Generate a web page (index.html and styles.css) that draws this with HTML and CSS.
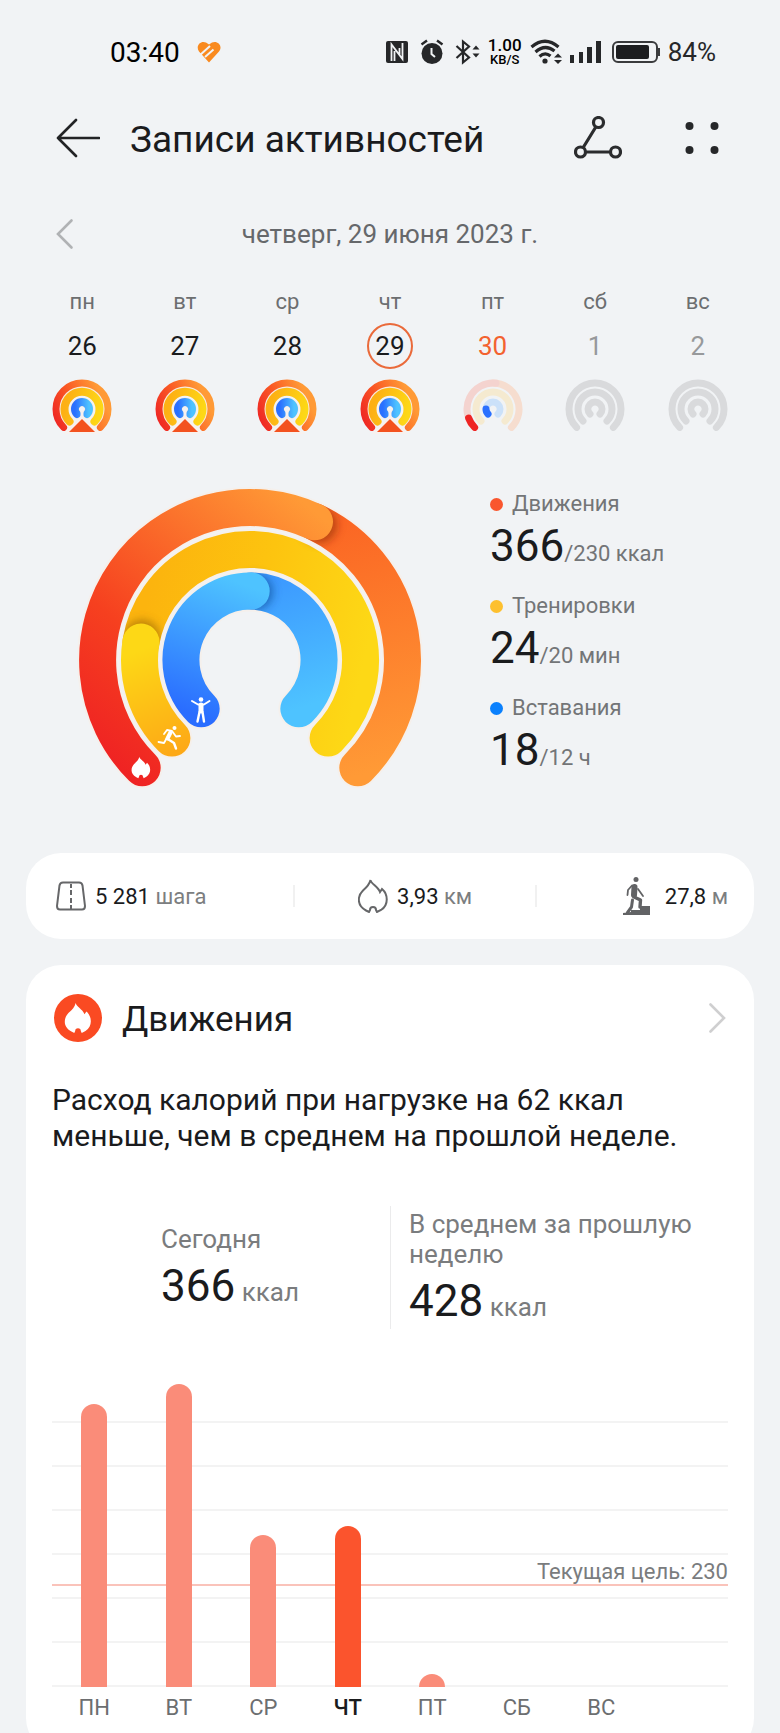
FILE: index.html
```html
<!DOCTYPE html>
<html lang="ru">
<head>
	<meta charset="UTF-8">
	<meta name="viewport" content="width=device-width, initial-scale=1">
	<title>Записи активностей</title>
	<link rel="stylesheet" href="styles.css">
</head>
<body>

<!-- shared shapes -->
<svg class="defs" aria-hidden="true">
	<defs>
		<linearGradient id="gMove" x1="0" y1="1" x2="1" y2="0.6">
			<stop offset="0" stop-color="#ee2424"/><stop offset="0.5" stop-color="#fa5a24"/><stop offset="1" stop-color="#ff9a36"/>
		</linearGradient>
		<linearGradient id="gTrain" x1="0" y1="0.6" x2="1" y2="0.8">
			<stop offset="0" stop-color="#fdb014"/><stop offset="1" stop-color="#fdd816"/>
		</linearGradient>
		<linearGradient id="gStand" x1="0" y1="0.7" x2="1" y2="0.7">
			<stop offset="0" stop-color="#2a70ff"/><stop offset="1" stop-color="#4ec3ff"/>
		</linearGradient>
	</defs>
	<symbol id="ringFull" viewBox="-30 -31 60 56">
		<g fill="none" stroke-linecap="round">
			<path stroke="#f8e9de" stroke-width="9" d="M-12.7 12.7A18 18 0 1 1 12.7 12.7M-5 5A7 7 0 1 1 5 5"/>
			<path stroke="url(#gMove)" stroke-width="7" d="M-18.4 18.4A26 26 0 1 1 18.4 18.4"/>
			<path stroke="url(#gTrain)" stroke-width="8" d="M-12.5 12.5A17.5 17.5 0 1 1 12.5 12.5"/>
			<path stroke="url(#gStand)" stroke-width="8" d="M-5 5A7 7 0 1 1 5 5"/>
		</g>
		<path fill="#f8f1ee" d="M0 7L18 25H-18z"/>
		<path fill="#f8f1ee" d="M-1.5 2h3v8h-3z"/>
		<path fill="#f3521f" d="M0 10L13 23H-13z"/>
	</symbol>
	<symbol id="ringEmpty" viewBox="-30 -31 60 56">
		<g fill="none" stroke="#d9dadc" stroke-width="7" stroke-linecap="round">
			<path d="M-18.4 18.4A26 26 0 1 1 18.4 18.4"/>
			<path d="M-12 12A17 17 0 1 1 12 12"/>
			<path d="M-5 5A7 7 0 1 1 5 5"/>
		</g>
	</symbol>
	<symbol id="flame" viewBox="0 0 30 34">
		<path d="M12.5 1C13 5 20 7.5 22 13L24 10C30 15 31 26 23 31L19 33L18 31A3 3 0 0 0 12 31L11 33L8 31.5C-1.5 26.500 -0.500 17 5 11.500C9 8 11.500 5.500 12.500 1z"/>
	</symbol>
</svg>

<div class="statusBar">
	<div class="statusLeft">
		<span class="clock">03:40</span>
		<svg width="24" height="22" viewBox="0 0 24 22">
			<path d="M12 21.5L2 10.5C-2 4.5 4 -1 9 1.5L12 3.5L15 1.5C20 -1 26.500 4.500 22 10.500z" fill="#f98a1f"/>
			<path d="M2 15L13 5M8 16L16.500 8.500" fill="none" stroke="#f1f3f5" stroke-width="2"/>
		</svg>
	</div>
	<div class="statusRight">
		<svg width="26" height="24" viewBox="0 0 26 24">
			<rect x="2" y="1" width="22" height="22" rx="2" fill="#262729"/>
			<path d="M7.5 21V4.5l8 10.5V8M10.5 21V11M18.5 3v16l-8-10.5" fill="none" stroke="#f1f3f5" stroke-width="1.8"/>
		</svg>
		<svg width="28" height="26" viewBox="0 0 28 26">
			<circle cx="14" cy="14.5" r="10.5" fill="#262729"/>
			<path d="M3.5 5.5L9 1.5M24.5 5.5L19 1.5" stroke="#262729" stroke-width="2.4"/>
			<path d="M13.5 9v6l3.5 3" fill="none" stroke="#f1f3f5" stroke-width="2"/>
		</svg>
		<svg width="26" height="26" viewBox="0 0 26 26">
			<path d="M2.5 7L15 18.5L9 23.5V2.5L15 7.5L2.5 19" fill="none" stroke="#262729" stroke-width="2.2"/>
			<path d="M18.5 10.5L22 6.5L25.5 10.5zM18.5 14.5L22 18.5L25.5 14.5z" fill="#262729"/>
		</svg>
		<span class="speed"><b>1.00</b><b>KB/S</b></span>
		<svg width="32" height="26" viewBox="0 0 32 26">
			<g fill="none" stroke="#262729" stroke-width="3.2">
				<path d="M1.5 8Q15 -3.5 28.5 8"/>
				<path d="M5.5 13Q15 4.5 24.5 12"/>
				<path d="M9.5 17.5Q15 12.5 20.5 17"/>
			</g>
			<circle cx="15" cy="22" r="2.6" fill="#262729"/>
			<path d="M24 18.5L28 14.5L32 18.5zM24 21L28 25L32 21z" fill="#262729"/>
		</svg>
		<svg width="32" height="24" viewBox="0 0 32 24" fill="#262729">
			<rect x="0" y="15" width="4" height="8"/><rect x="9" y="12" width="4" height="11"/><rect x="17" y="7" width="5" height="16"/><rect x="26" y="1" width="5" height="22"/>
		</svg>
		<svg width="50" height="24" viewBox="0 0 50 24">
			<rect x="3" y="2" width="44" height="20" rx="5" fill="none" stroke="#3a3b3d" stroke-width="2"/>
			<rect x="6" y="5" width="33" height="14" rx="2" fill="#1d1e20"/>
			<rect x="48" y="8" width="2" height="8" fill="#3a3b3d"/>
		</svg>
		<span class="battery">84%</span>
	</div>
</div>

<header class="topBar">
	<button type="button" class="iconBtn" aria-label="Назад">
		<svg width="44" height="44" viewBox="0 0 44 44" fill="none" stroke="#222325" stroke-width="2.6" stroke-linecap="round" stroke-linejoin="round"><path d="M20 4L2 22L20 40M2 22H43"/></svg>
	</button>
	<h1 class="title">Записи активностей</h1>
	<button type="button" class="iconBtn" aria-label="Маршрут">
		<svg width="48" height="44" viewBox="0 0 48 44" fill="none" stroke="#2b2c2e" stroke-width="3.2">
			<path d="M21.5 11.5L9.5 31M12 36H36"/><circle cx="24.5" cy="6.5" r="5"/><circle cx="6.5" cy="36" r="5"/><circle cx="41.5" cy="36" r="5"/>
		</svg>
	</button>
	<button type="button" class="iconBtn menuBtn" aria-label="Меню">
		<svg width="34" height="34" viewBox="0 0 34 34" fill="#262729"><circle cx="4.5" cy="5" r="4"/><circle cx="29.5" cy="5" r="4"/><circle cx="4.5" cy="29" r="4"/><circle cx="29.5" cy="29" r="4"/></svg>
	</button>
</header>

<main>
	<div class="dateRow">
		<button type="button" class="iconBtn" aria-label="Предыдущий день">
			<svg width="18" height="32" viewBox="0 0 18 32" fill="none" stroke="#b0b2b4" stroke-width="2.6" stroke-linecap="round"><path d="M15.5 2.5L2 16L15.5 29.5"/></svg>
		</button>
		<span>четверг, 29 июня 2023 г.</span>
	</div>

	<div class="week">
		<button type="button" class="day"><span class="dayName">пн</span><span class="dayNum">26</span><svg class="dayRing"><use href="#ringFull"/></svg></button>
		<button type="button" class="day"><span class="dayName">вт</span><span class="dayNum">27</span><svg class="dayRing"><use href="#ringFull"/></svg></button>
		<button type="button" class="day"><span class="dayName">ср</span><span class="dayNum">28</span><svg class="dayRing"><use href="#ringFull"/></svg></button>
		<button type="button" class="day selected"><span class="dayName">чт</span><span class="dayNum">29</span><svg class="dayRing"><use href="#ringFull"/></svg></button>
		<button type="button" class="day today"><span class="dayName">пт</span><span class="dayNum">30</span>
			<svg class="dayRing" viewBox="-30 -31 60 56" fill="none" stroke-width="7" stroke-linecap="round">
				<path stroke="#f6ddcf" d="M0 -26A26 26 0 0 1 18.4 18.4"/>
				<path stroke="#f4d3cf" d="M-18.4 18.4A26 26 0 0 1 3 -25.8"/>
				<path stroke="#f5ead0" d="M-12 12A17 17 0 1 1 12 12"/>
				<path stroke="#cbe1f9" d="M-5 5A7 7 0 1 1 5 5"/>
				<path stroke="#ee2424" d="M-18.4 18.4A26 26 0 0 1 -24.4 9"/>
				<path stroke="#2a70ff" d="M-5 5A7 7 0 0 1 -7 0"/>
			</svg>
		</button>
		<button type="button" class="day future"><span class="dayName">сб</span><span class="dayNum">1</span><svg class="dayRing"><use href="#ringEmpty"/></svg></button>
		<button type="button" class="day future"><span class="dayName">вс</span><span class="dayNum">2</span><svg class="dayRing"><use href="#ringEmpty"/></svg></button>
	</div>

	<section class="rings">
		<svg class="bigRing" viewBox="-180 -180 360 310">
			<defs>
				<linearGradient id="moveBase" gradientUnits="userSpaceOnUse" x1="60" y1="-140" x2="130" y2="110"><stop offset="0" stop-color="#fb6423"/><stop offset="1" stop-color="#ff9a36"/></linearGradient>
				<linearGradient id="moveHead" gradientUnits="userSpaceOnUse" x1="-130" y1="110" x2="75" y2="-140"><stop offset="0" stop-color="#ef2323"/><stop offset="0.35" stop-color="#f6401f"/><stop offset="1" stop-color="#ff9a36"/></linearGradient>
				<linearGradient id="trainBase" gradientUnits="userSpaceOnUse" x1="-110" y1="-30" x2="110" y2="20"><stop offset="0" stop-color="#fcb40e"/><stop offset="0.5" stop-color="#fdc40f"/><stop offset="1" stop-color="#fdd816"/></linearGradient>
				<linearGradient id="trainHead" gradientUnits="userSpaceOnUse" x1="-70" y1="90" x2="-110" y2="-10"><stop offset="0" stop-color="#fda916"/><stop offset="1" stop-color="#fdd816"/></linearGradient>
				<linearGradient id="standBase" gradientUnits="userSpaceOnUse" x1="20" y1="-80" x2="60" y2="45"><stop offset="0" stop-color="#3c99ff"/><stop offset="1" stop-color="#4ec3ff"/></linearGradient>
				<linearGradient id="standHead" gradientUnits="userSpaceOnUse" x1="-55" y1="55" x2="-5" y2="-75"><stop offset="0" stop-color="#2a6dff"/><stop offset="1" stop-color="#4ec3ff"/></linearGradient>
				<filter id="soft" x="-50%" y="-50%" width="200%" height="200%"><feGaussianBlur stdDeviation="4"/></filter>
				<mask id="ringMask" maskUnits="userSpaceOnUse" x="-180" y="-180" width="360" height="310">
					<g fill="none" stroke="#fff" stroke-width="37" stroke-linecap="round">
						<path d="M-107.8 107.8A152.5 152.5 0 1 1 107.8 107.8"/><path d="M-78.1 78.1A110.5 110.5 0 1 1 78.1 78.1"/><path d="M-48.8 48.8A69 69 0 1 1 48.8 48.8"/>
					</g>
				</mask>
			</defs>
			<g fill="none" stroke-linecap="round">
				<g stroke="#f5f0ec" stroke-width="41">
					<path d="M-107.8 107.8A152.5 152.5 0 1 1 107.8 107.8"/><path d="M-78.1 78.1A110.5 110.5 0 1 1 78.1 78.1"/><path d="M-48.8 48.8A69 69 0 1 1 48.8 48.8"/>
				</g>
				<g stroke-width="37">
					<path stroke="url(#moveBase)" d="M64.5 -138.2A152.5 152.5 0 0 1 107.8 107.8"/>
					<path stroke="url(#trainBase)" d="M-109 -18A110.5 110.5 0 1 1 78.1 78.1"/>
					<path stroke="url(#standBase)" d="M1.2 -69A69 69 0 0 1 48.8 48.8"/>
				</g>
			</g>
			<g mask="url(#ringMask)">
				<g filter="url(#soft)" fill-opacity="0.5">
					<circle cx="69" cy="-135" r="18" fill="#7a2400"/>
					<circle cx="-108" cy="-22" r="18" fill="#7a5200"/>
					<circle cx="5" cy="-68" r="18" fill="#003a7a"/>
				</g>
			</g>
			<g fill="none" stroke-width="37" stroke-linecap="round">
				<path stroke="url(#moveHead)" d="M-107.8 107.8A152.5 152.5 0 0 1 64.5 -138.2"/>
				<path stroke="url(#trainHead)" d="M-78.1 78.1A110.5 110.5 0 0 1 -109 -18"/>
				<path stroke="url(#standHead)" d="M-48.8 48.8A69 69 0 0 1 1.2 -69"/>
			</g>
			<use href="#flame" x="-119" y="96" width="20" height="23" fill="#fff"/>
			<!-- runner -->
			<g fill="none" stroke="#fff" stroke-width="1.8" stroke-linecap="round" stroke-linejoin="round">
				<circle cx="-75.5" cy="68" r="2" fill="#fff" stroke="none"/>
				<path d="M-86 74L-83 70L-78 71L-74 76.5L-70 76"/>
				<path d="M-79.5 72.5L-82.5 78.5" stroke-width="4"/>
				<path d="M-83.5 78.5L-86 83L-91.5 82"/>
				<path d="M-81.5 79.5L-76 83L-74 88.5" stroke-width="2.4"/>
			</g>
			<!-- standing person -->
			<g fill="none" stroke="#fff" stroke-width="2" stroke-linecap="round" stroke-linejoin="round">
				<circle cx="-49" cy="39.5" r="2.3" fill="#fff" stroke="none"/>
				<path d="M-58 41L-52 44.5H-46L-40.5 41"/>
				<path d="M-49 45V51" stroke-width="5"/>
				<path d="M-50.5 52L-52.5 61.5M-47.5 52L-46 61.5" stroke-width="2.4"/>
			</g>
		</svg>

		<ul class="legend">
			<li><span class="legendName move">Движения</span><span class="legendValue"><strong>366</strong>/230 ккал</span></li>
			<li><span class="legendName train">Тренировки</span><span class="legendValue"><strong>24</strong>/20 мин</span></li>
			<li><span class="legendName stand">Вставания</span><span class="legendValue"><strong>18</strong>/12 ч</span></li>
		</ul>
	</section>

	<section class="card stats">
		<div class="stat">
			<svg width="30" height="30" viewBox="0 0 30 30" fill="none" stroke="#666769" stroke-width="2"><path d="M7 1.5H23Q26 1.5 26.5 4.5L29 25Q29 28.5 26 28.5H4Q1 28.5 1 25L3.5 4.5Q4 1.5 7 1.5z"/><path d="M15 3v4M15 9v5M15 17v5M15 24v4"/></svg>
			<span><b>5 281</b> шага</span>
		</div>
		<div class="stat">
			<svg width="30" height="34" fill="none" stroke="#666769" stroke-width="2"><use href="#flame"/></svg>
			<span><b>3,93</b> км</span>
		</div>
		<div class="stat stairs">
			<svg width="28" height="38" viewBox="0 0 28 38">
				<path d="M0 38v-2l8-1v-2h9v-4h10v9z" fill="#626365"/>
				<g fill="none" stroke="#626365" stroke-linecap="round" stroke-linejoin="round">
					<circle cx="13" cy="2.5" r="2.5" fill="#626365" stroke="none"/>
					<path d="M11.5 10L11 18" stroke-width="6"/>
					<path d="M9 8.5L5 13L4.5 18M15 12L20 19" stroke-width="1.8"/>
					<path d="M11 20L17.5 23L17 30" stroke-width="3.4"/>
					<path d="M9.5 23L8.5 30L4.5 35.5" stroke-width="3"/>
				</g>
			</svg>
			<span><b>27,8</b> м</span>
		</div>
	</section>

	<section class="card activity">
		<a class="cardHead" href="#move">
			<svg width="48" height="48" viewBox="0 0 48 48"><circle cx="24" cy="24" r="24" fill="#fa4a22"/><use href="#flame" x="10" y="8" width="28" height="32" fill="#fff"/></svg>
			<h2>Движения</h2>
			<svg width="18" height="32" viewBox="0 0 18 32" fill="none" stroke="#cfcfd0" stroke-width="2.6" stroke-linecap="round"><path d="M2.5 2.5L16 16L2.5 29.5"/></svg>
		</a>
		<p class="summary">Расход калорий при нагрузке на 62 ккал меньше, чем в среднем на прошлой неделе.</p>

		<div class="compare">
			<div class="compareItem now">
				<span class="compareName">Сегодня</span>
				<span class="compareValue"><strong>366</strong> ккал</span>
			</div>
			<div class="compareItem average">
				<span class="compareName">В среднем за прошлую неделю</span>
				<span class="compareValue"><strong>428</strong> ккал</span>
			</div>
		</div>

		<div class="chart">
			<div class="goal">Текущая цель: 230</div>
			<div class="bars">
				<div class="bar" style="height:283px"></div>
				<div class="bar" style="height:303px"></div>
				<div class="bar" style="height:152px"></div>
				<div class="bar current" style="height:161px"></div>
				<div class="bar" style="height:13px"></div>
			</div>
		</div>
		<div class="labels">
			<span>ПН</span><span>ВТ</span><span>СР</span><span class="current">ЧТ</span><span>ПТ</span><span>СБ</span><span>ВС</span>
		</div>
	</section>
</main>

</body>
</html>
```
FILE: styles.css
```css
*{
	box-sizing: border-box;
}
body{
	margin: 0;
	height: 100vh;
	overflow-y: auto;
	scrollbar-width: none;
	background: #f1f3f5;
	color: #1a1b1d;
	font-family: Roboto, "Noto Sans", sans-serif;
	font-size: 22px;
}
h1, h2, p, ul{
	margin: 0;
	padding: 0;
	font-weight: 400;
}
strong, b{
	font-weight: 400;
	color: #1a1b1d;
}
svg{
	display: block;
	flex: none;
}
button{
	border: 0;
	padding: 0;
	background: none;
	font: inherit;
	color: inherit;
}
.defs{
	position: absolute;
	width: 0;
	height: 0;
}

/* status bar */
.statusBar{
	display: flex;
	justify-content: space-between;
	align-items: center;
	height: 104px;
	padding: 0 64px 0 110px;
}
.statusLeft{
	display: flex;
	align-items: center;
	gap: 17px;
}
.clock{
	font-size: 28px;
	color: #000;
}
.statusRight{
	display: flex;
	align-items: center;
	gap: 8px;
}
.speed{
	display: flex;
	flex-direction: column;
	align-items: center;
	width: 34px;
	font-size: 17px;
	line-height: 16px;
}
.speed b{
	font-weight: 500;
	color: #000;
}
.speed b + b{
	font-size: 13px;
	line-height: 14px;
}
.battery{
	font-size: 26px;
	color: #262729;
}

/* header */
.topBar{
	display: flex;
	align-items: center;
	height: 68px;
	padding: 0 61px 0 56px;
}
.title{
	flex: 1;
	margin-left: 30px;
	padding-top: 4px;
	font-size: 37px;
	line-height: 44px;
}
.menuBtn{
	margin-left: 63px;
}

/* date and week */
.dateRow{
	display: grid;
	grid-template-columns: 1fr auto 1fr;
	align-items: center;
	height: 44px;
	margin-top: 40px;
	padding: 0 56px;
	font-size: 26px;
	color: #66686b;
}
.dateRow .iconBtn{
	justify-self: start;
}
.week{
	display: grid;
	grid-template-columns: repeat(7, 1fr);
	margin-top: 32px;
	padding: 0 31px;
}
.day{
	display: flex;
	flex-direction: column;
	align-items: center;
}
.dayName{
	line-height: 28px;
	color: #6c6e70;
}
.dayNum{
	width: 46px;
	height: 46px;
	margin-top: 7px;
	border: 2px solid transparent;
	border-radius: 50%;
	font-size: 26px;
	line-height: 42px;
}
.dayRing{
	width: 60px;
	height: 56px;
	margin-top: 9px;
}
.selected .dayNum{
	border-color: #ea6a3a;
}
.today .dayNum{
	color: #f3622f;
}
.future .dayNum{
	color: #97999b;
}

/* rings */
.rings{
	display: flex;
	gap: 60px;
	margin-top: 46px;
	padding-left: 70px;
}
.bigRing{
	width: 360px;
	height: 310px;
}
.legend{
	display: flex;
	flex-direction: column;
	gap: 14px;
	padding-top: 8px;
	list-style: none;
	color: #737577;
}
.legendName{
	display: flex;
	align-items: center;
	gap: 9px;
	line-height: 32px;
}
.legendName::before{
	content: "";
	width: 13px;
	height: 13px;
	border-radius: 50%;
	background: #f9562e;
}
.legendName.train::before{
	background: #fdc02f;
}
.legendName.stand::before{
	background: #0a80fd;
}
.legendValue{
	display: block;
	padding-top: 4px;
	line-height: 44px;
}
.legendValue strong, .compareValue strong{
	font-size: 44px;
}

/* cards */
.card{
	margin: 0 26px;
	border-radius: 35px;
	background: #fff;
}
.stats{
	display: grid;
	grid-template-columns: 5fr 5fr 4fr;
	align-items: center;
	height: 86px;
	margin-top: 63px;
	padding: 0 26px;
	color: #7c7e80;
}
.stat{
	display: flex;
	align-items: center;
	justify-content: center;
	gap: 9px;
}
.stat + .stat{
	border-left: 2px solid #f1f1f1;
	height: 22px;
}
.stat:first-child{
	justify-content: flex-start;
	padding-left: 4px;
}
.stat.stairs{
	justify-content: flex-end;
	gap: 14px;
}

.activity{
	margin-top: 26px;
	padding: 24px 26px;
}
.cardHead{
	display: flex;
	align-items: center;
	gap: 20px;
	height: 58px;
	padding: 0 2px;
	color: inherit;
	text-decoration: none;
}
.cardHead h2{
	flex: 1;
	padding-top: 4px;
	font-size: 35px;
	line-height: 40px;
}
.summary{
	margin-top: 35px;
	font-size: 30px;
	line-height: 36px;
}
.compare{
	display: grid;
	grid-template-columns: 1fr 1fr;
	height: 123px;
	margin-top: 52px;
	font-size: 26px;
	line-height: 30px;
	color: #7a7c7e;
}
.compareItem{
	display: flex;
	flex-direction: column;
	justify-content: center;
	gap: 10px;
	padding-top: 2px;
}
.compareItem.now{
	padding-left: 109px;
}
.compareItem.average{
	padding-left: 18px;
	border-left: 1px solid #ebebec;
}
.compareValue{
	line-height: 44px;
}

/* chart */
.chart{
	position: relative;
	height: 308px;
	margin-top: 50px;
	background: repeating-linear-gradient(to top, #f3f3f3 0 2px, transparent 2px 44px);
}
.goal{
	position: absolute;
	left: 0;
	right: 0;
	bottom: 101px;
	border-bottom: 2px solid #fac3ba;
	line-height: 24px;
	text-align: right;
	color: #7a7c7e;
}
.bars{
	position: relative;
	display: grid;
	grid-template-columns: repeat(8, 1fr);
	align-items: end;
	justify-items: center;
	height: 100%;
}
.bar{
	width: 26px;
	border-radius: 13px 13px 0 0;
	background: #fa8c79;
}
.bar.current{
	background: #fb542d;
}
.labels{
	display: grid;
	grid-template-columns: repeat(8, 1fr);
	line-height: 42px;
	text-align: center;
	color: #6c6e70;
}
.labels .current{
	font-weight: 500;
	color: #1a1b1d;
}
```
